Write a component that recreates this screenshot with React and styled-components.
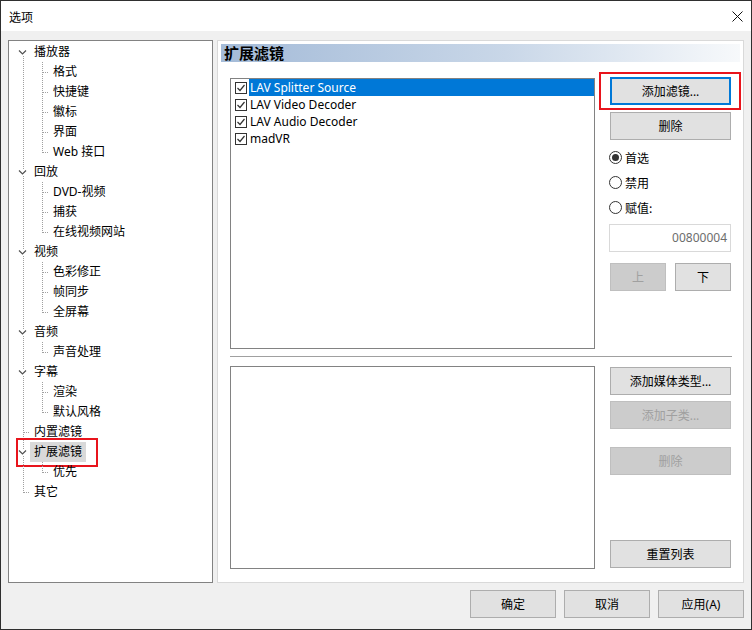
import React from 'react'
import styled, { createGlobalStyle, css } from 'styled-components'

const tree = [
  { label: '播放器', children: ['格式', '快捷键', '徽标', '界面', 'Web 接口'] },
  { label: '回放', children: ['DVD-视频', '捕获', '在线视频网站'] },
  { label: '视频', children: ['色彩修正', '帧同步', '全屏幕'] },
  { label: '音频', children: ['声音处理'] },
  { label: '字幕', children: ['渲染', '默认风格'] },
  { label: '内置滤镜' },
  { label: '扩展滤镜', children: ['优先'], selected: true, marked: true },
  { label: '其它' },
]

const filters = [
  { name: 'LAV Splitter Source', selected: true },
  { name: 'LAV Video Decoder' },
  { name: 'LAV Audio Decoder' },
  { name: 'madVR' },
]

// flatten the tree into rows, each knowing which guide lines to draw
const rows = tree.flatMap((node, i) => {
  const top = {
    level: 0,
    label: node.label,
    selected: node.selected,
    marked: node.marked,
    expandable: !!node.children,
    first: i === 0,
    last: i === tree.length - 1,
  }
  const kids = (node.children || []).map((label, j) => ({
    level: 1,
    label,
    last: j === node.children.length - 1,
  }))
  return [top, ...kids]
})

const DOT = { stroke: '#a0a0a0', strokeDasharray: '1 1', shapeRendering: 'crispEdges' }

const Guides = ({ row }) => {
  if (row.level === 1) {
    return <svg width="40" height="20">
      <line x1="14.5" y1="0" x2="14.5" y2="20" {...DOT} />
      <line x1="33.5" y1="0" x2="33.5" y2={row.last ? 11 : 20} {...DOT} />
      <line x1="34" y1="10.5" x2="41" y2="10.5" {...DOT} />
    </svg>
  }
  return <svg width="21" height="20">
    {row.expandable && !row.first && <line x1="14.5" y1="0" x2="14.5" y2="7" {...DOT} />}
    {row.expandable && <line x1="14.5" y1="14" x2="14.5" y2="20" {...DOT} />}
    {!row.expandable && <line x1="14.5" y1="0" x2="14.5" y2={row.last ? 11 : 20} {...DOT} />}
    {!row.expandable && <line x1="15" y1="10.5" x2="22" y2="10.5" {...DOT} />}
    {row.expandable && (
      <polyline points="10,8.5 13.5,12 17,8.5" fill="none" stroke="#505050" strokeWidth="1.2" />
    )}
  </svg>
}

const CheckBox = () => (
  <Check>
    <svg width="10" height="10" viewBox="0 0 10 10">
      <polyline points="1.5,5 4,7.5 8.5,2" fill="none" stroke="#333" strokeWidth="1.2" />
    </svg>
  </Check>
)

const App = () => (
  <>
    <GlobalStyle />
    <Window>
      <TitleBar>
        <span>选项</span>
        <svg width="11" height="11" viewBox="0 0 11 11">
          <path d="M0.5 0.5 L10.5 10.5 M10.5 0.5 L0.5 10.5" stroke="#111" strokeWidth="1" />
        </svg>
      </TitleBar>

      <Body>
        <Main>
          <TreePanel>
            {rows.map((row, i) => (
              <TreeRow key={i}>
                <Guides row={row} />
                <TreeLabel selected={row.selected}>{row.label}</TreeLabel>
                {row.marked && <TreeMark />}
              </TreeRow>
            ))}
          </TreePanel>

          <RightPanel>
            <Header>扩展滤镜</Header>
            <Content>
              <UpperRow>
                <List>
                  {filters.map(f => (
                    <FilterRow key={f.name}>
                      <CheckBox />
                      <FilterName selected={f.selected}>{f.name}</FilterName>
                    </FilterRow>
                  ))}
                </List>

                <ButtonCol>
                  <Marked>
                    <Button focused>添加滤镜...</Button>
                    <ButtonMark />
                  </Marked>
                  <Button style={{ marginTop: 7 }}>删除</Button>

                  <Radios>
                    <RadioRow><Radio checked />首选</RadioRow>
                    <RadioRow><Radio />禁用</RadioRow>
                    <RadioRow><Radio />赋值:</RadioRow>
                  </Radios>

                  <ValueBox>00800004</ValueBox>

                  <ArrowRow>
                    <SmallButton disabled>上</SmallButton>
                    <SmallButton>下</SmallButton>
                  </ArrowRow>
                </ButtonCol>
              </UpperRow>

              <Separator />

              <LowerRow>
                <List />
                <ButtonCol lower>
                  <Button>添加媒体类型...</Button>
                  <Button disabled style={{ marginTop: 6 }}>添加子类...</Button>
                  <Button disabled style={{ marginTop: 18 }}>删除</Button>
                  <Spacer />
                  <Button>重置列表</Button>
                </ButtonCol>
              </LowerRow>
            </Content>
          </RightPanel>
        </Main>

        <Footer>
          <FooterButton>确定</FooterButton>
          <FooterButton>取消</FooterButton>
          <FooterButton>应用(A)</FooterButton>
        </Footer>
      </Body>
    </Window>
  </>
)

const GlobalStyle = createGlobalStyle`
  body {
    margin: 0;
    background: #fff;
  }
  * {
    box-sizing: border-box;
  }
`

const Window = styled.div`
  width: 752px;
  height: 630px;
  border: 1px solid #2f2f2f;
  display: flex;
  flex-direction: column;
  background: #f0f0f0;
  font-family: "Noto Sans", "Noto Sans CJK SC", sans-serif;
  font-size: 12px;
  color: #000;
`

const TitleBar = styled.div`
  height: 30px;
  flex: none;
  background: #fff;
  display: flex;
  align-items: center;
  justify-content: space-between;
  padding: 0 8px 0 8px;
  font-family: "Noto Sans CJK SC", sans-serif;
`

const Body = styled.div`
  flex: 1;
  padding: 9px 7px 0;
  display: flex;
  flex-direction: column;
`

const Main = styled.div`
  display: flex;
  gap: 4px;
  height: 543px;
`

const TreePanel = styled.div`
  width: 205px;
  border: 1px solid #828282;
  background: #fff;
  padding-top: 1px;
`

const TreeRow = styled.div`
  position: relative;
  display: flex;
  height: 20px;
  font-family: "Noto Sans", "Noto Sans CJK SC", sans-serif;
`

const TreeLabel = styled.span`
  padding: 0 4px;
  line-height: 20px;
  white-space: nowrap;
  ${p => p.selected && css`
    background: #d9d9d9;
  `}
`

const TreeMark = styled.div`
  position: absolute;
  left: 7px;
  top: -4px;
  width: 82px;
  height: 29px;
  border: 2px solid #e8141c;
`

const RightPanel = styled.div`
  flex: 1;
  border: 1px solid #d9d9d9;
  background: #fff;
  padding: 3px;
  display: flex;
  flex-direction: column;
`

const Header = styled.div`
  height: 18px;
  line-height: 18px;
  padding-left: 3px;
  font-family: "Noto Sans CJK SC", sans-serif;
  font-size: 15px;
  font-weight: 700;
  background: linear-gradient(to right, #a4bbd8, #c9d7e8 55%, #f7f9fb);
`

const Content = styled.div`
  padding: 16px 0 0 9px;
  display: flex;
  flex-direction: column;
`

const UpperRow = styled.div`
  display: flex;
  gap: 15px;
`

const LowerRow = styled.div`
  display: flex;
  gap: 15px;
  height: 203px;
  margin-top: 9px;
`

const List = styled.div`
  width: 365px;
  height: 271px;
  flex: none;
  border: 1px solid #828282;
  background: #fff;
  ${LowerRow} & {
    height: 100%;
  }
`

const FilterRow = styled.div`
  display: flex;
  align-items: center;
  height: 17px;
  padding-left: 4px;
`

const Check = styled.span`
  width: 12px;
  height: 12px;
  flex: none;
  border: 1px solid #333;
  background: #fff;
  display: flex;
  align-items: center;
  justify-content: center;
  margin-right: 2px;
`

const FilterName = styled.span`
  flex: 1;
  height: 100%;
  line-height: 17px;
  padding-left: 1px;
  white-space: nowrap;
  ${p => p.selected && css`
    background: #0078d7;
    color: #fff;
  `}
`

const ButtonCol = styled.div`
  width: 121px;
  display: flex;
  flex-direction: column;
  margin-top: ${p => (p.lower ? '1px' : '-1px')};
  padding-bottom: ${p => (p.lower ? '1px' : '0')};
`

const Button = styled.button`
  height: 28px;
  width: 100%;
  flex: none;
  padding: 0;
  border: 1px solid #adadad;
  background: #e1e1e1;
  color: #000;
  font-family: "Noto Sans", "Noto Sans CJK SC", sans-serif;
  font-size: 12px;
  ${p => p.focused && css`
    border-color: #0078d7;
    box-shadow: inset 0 0 0 1px #0078d7;
  `}
  &:disabled {
    background: #cccccc;
    border-color: #bfbfbf;
    color: #a0a0a0;
  }
`

const SmallButton = styled(Button)`
  width: 56px;
`

const FooterButton = styled(Button)`
  width: 86px;
`

const Marked = styled.div`
  position: relative;
`

const ButtonMark = styled.div`
  position: absolute;
  left: -11px;
  top: -5px;
  width: 142px;
  height: 38px;
  border: 2px solid #e8141c;
`

const Radios = styled.div`
  margin-top: 5px;
  display: flex;
  flex-direction: column;
`

const RadioRow = styled.div`
  height: 25px;
  display: flex;
  align-items: center;
  gap: 3px;
  margin-left: -1px;
  font-family: "Noto Sans CJK SC", sans-serif;
`

const Radio = styled.span`
  width: 13px;
  height: 13px;
  border: 1px solid #333;
  border-radius: 50%;
  background: #fff;
  display: flex;
  align-items: center;
  justify-content: center;
  ${p => p.checked && css`
    &::after {
      content: '';
      width: 7px;
      height: 7px;
      border-radius: 50%;
      background: #333;
    }
  `}
`

const ValueBox = styled.div`
  margin-top: 4px;
  margin-left: -1px;
  height: 28px;
  border: 1px solid #d9d9d9;
  background: #fff;
  color: #6d6d6d;
  text-align: right;
  line-height: 26px;
  padding-right: 3px;
`

const ArrowRow = styled.div`
  margin-top: 11px;
  display: flex;
  justify-content: space-between;
`

const Separator = styled.div`
  margin: 7px 8px 0 0;
  border-top: 1px solid #a0a0a0;
`

const Spacer = styled.div`
  flex: 1;
`

const Footer = styled.div`
  display: flex;
  justify-content: flex-end;
  gap: 8px;
  margin-top: 7px;
`

export default App
